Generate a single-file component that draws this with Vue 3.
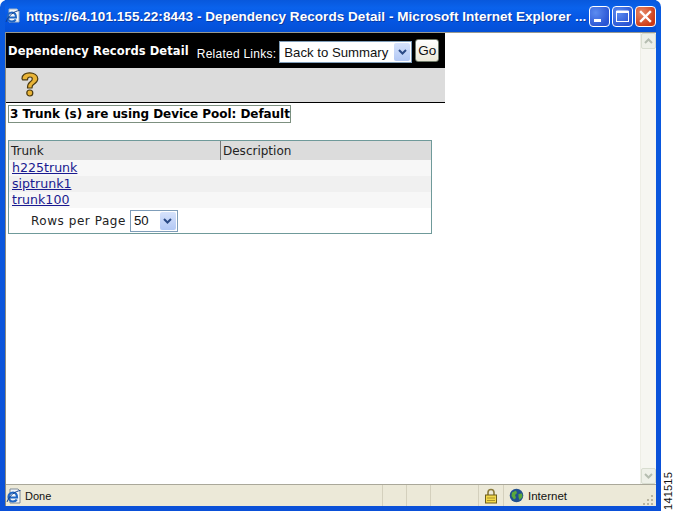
<script setup>
const rows = [
  { name: 'h225trunk' },
  { name: 'siptrunk1' },
  { name: 'trunk100' }
]
</script>

<template>
  <div class="screen">
    <div class="window">
      <div class="titlebar">
        <svg class="ie-small" width="16" height="16" viewBox="0 0 16 16">
          <path d="M4 1h8l2 2v11H4z" fill="#f4f7fb" stroke="#9fb2c8" stroke-width="1" />
          <path d="M3.500 9.500h7.500C11 6 9 4.500 7 4.500C4.500 4.500 2.500 6.500 2.500 9C2.500 11.800 4.500 13.500 7 13.500C8.800 13.500 10.200 12.600 10.800 11.500" fill="none" stroke="#1f66c4" stroke-width="2" />
          <path d="M1 14C3 8 9 3 14.500 2.500" fill="none" stroke="#123f8c" stroke-width="1" />
        </svg>
        <span class="title-text">https://64.101.155.22:8443 - Dependency Records Detail - Microsoft Internet Explorer ...</span>
        <div class="controls">
          <div class="ctl ctl-blue">
            <svg width="19" height="19" viewBox="0 0 19 19"><rect x="4" y="12" width="7" height="3" fill="#fff" /></svg>
          </div>
          <div class="ctl ctl-blue">
            <svg width="19" height="19" viewBox="0 0 19 19"><rect x="3.500" y="4.500" width="12" height="10" fill="none" stroke="#fff" stroke-width="1" /><rect x="3.500" y="3.500" width="12" height="2.500" fill="#fff" /></svg>
          </div>
          <div class="ctl ctl-red">
            <svg width="19" height="19" viewBox="0 0 19 19"><path d="M5 5l9 9M14 5l-9 9" stroke="#fff" stroke-width="2.400" stroke-linecap="square" /></svg>
          </div>
        </div>
      </div>

      <div class="body">
        <div class="page">
          <div class="content">
            <div class="blackbar">
              <span class="bar-title">Dependency Records Detail</span>
              <span class="bar-links">Related Links:</span>
              <div class="select select-back">
                <span class="select-text">Back to Summary</span>
                <span class="select-arrow">
                  <svg width="9" height="6" viewBox="0 0 9 6"><path d="M1 1l3.500 3.500L8 1" fill="none" stroke="#2b4a86" stroke-width="2" /></svg>
                </span>
              </div>
              <div class="go">Go</div>
            </div>
            <div class="toolbar">
              <svg class="help" width="18" height="25" viewBox="0 0 18 25">
                <path d="M1 6.500C1 2.800 4.500 0.800 8.500 0.800C13 0.800 16.800 3 16.800 6.800C16.800 9.800 14.500 11.200 12.500 12.500C11.300 13.300 11 14 11 16H6.500C6.500 13 6.800 11.600 8.800 10.200C10.200 9.200 11.300 8.500 11.300 7C11.300 5.700 10.300 5 9 5C7.500 5 6.500 6 6.500 7.800L1.500 7.800z" fill="#e9b437" stroke="#4b3a10" stroke-width="1.200" stroke-linejoin="round" />
                <circle cx="8.800" cy="21" r="3" fill="#e9b437" stroke="#4b3a10" stroke-width="1.200" />
              </svg>
            </div>
            <div class="status-row"><span class="status-box">3 Trunk (s) are using Device Pool: Default</span></div>

            <div class="table-box">
              <div class="thead">
                <div class="th th-a">Trunk</div>
                <div class="th th-b">Description</div>
              </div>
              <div v-for="r in rows" :key="r.name" class="tr">
                <a class="trunk-link">{{ r.name }}</a>
              </div>
              <div class="pager">
                <span>Rows per Page</span>
                <div class="select select-rows">
                  <span class="select-text">50</span>
                  <span class="select-arrow">
                    <svg width="9" height="6" viewBox="0 0 9 6"><path d="M1 1l3.500 3.500L8 1" fill="none" stroke="#2b4a86" stroke-width="2" /></svg>
                  </span>
                </div>
              </div>
            </div>
          </div>
          <div class="scrollbar">
            <div class="sb-btn">
              <svg width="9" height="6" viewBox="0 0 9 6"><path d="M1 5l3.500-3.500L8 5" fill="none" stroke="#b5bdb0" stroke-width="2" /></svg>
            </div>
            <div class="sb-btn">
              <svg width="9" height="6" viewBox="0 0 9 6"><path d="M1 1l3.500 3.500L8 1" fill="none" stroke="#b5bdb0" stroke-width="2" /></svg>
            </div>
          </div>
        </div>
        <div class="statusbar">
          <svg class="ie-status" width="16" height="16" viewBox="0 0 16 16">
            <path d="M4 1h8l2 2v12H4z" fill="#f4f7fb" stroke="#7d8a99" stroke-width="1" />
            <path d="M3.500 9.500h7.500C11 6 9 4.500 7 4.500C4.500 4.500 2.500 6.500 2.500 9C2.500 11.800 4.500 13.500 7 13.500C8.800 13.500 10.200 12.600 10.800 11.500" fill="none" stroke="#1f66c4" stroke-width="2.200" />
            <path d="M1 14C3 8 9 3 14.500 2.500" fill="none" stroke="#123f8c" stroke-width="1" />
          </svg>
          <span class="sb-done">Done</span>
          <div class="sb-cells">
            <span class="cell"></span>
            <span class="cell"></span>
            <span class="cell cell-wide"></span>
            <span class="cell cell-lock">
              <svg width="14" height="16" viewBox="0 0 14 16">
                <path d="M4 7V4.500a3 3 0 0 1 6 0V7" fill="none" stroke="#8a7a3a" stroke-width="1.600" />
                <rect x="1.500" y="7" width="11" height="8" fill="#f2d84a" stroke="#6e5f1c" />
                <path d="M3 10h8M3 12.500h8" stroke="#a8922a" />
              </svg>
            </span>
            <span class="cell-zone">
              <svg width="15" height="15" viewBox="0 0 15 15">
                <circle cx="7.500" cy="7.500" r="6.800" fill="#21508f" />
                <path d="M3 4.500L7 2.500L8 5L6 7L7 10L5 11.500L2.500 8zM9.500 6L13 5.500L13.500 9L10.500 12L9.500 9z" fill="#5aa83c" />
              </svg>
              <span>Internet</span>
            </span>
            <span class="grip">
              <svg width="12" height="12" viewBox="0 0 12 12" fill="#b8b4a0">
                <rect x="9" y="1" width="2" height="2" /><rect x="5" y="5" width="2" height="2" /><rect x="9" y="5" width="2" height="2" />
                <rect x="1" y="9" width="2" height="2" /><rect x="5" y="9" width="2" height="2" /><rect x="9" y="9" width="2" height="2" />
              </svg>
            </span>
          </div>
        </div>
      </div>
    </div>
    <div class="side">
      <span class="figure-id">141515</span>
    </div>
  </div>
</template>

<style>
html, body { margin: 0; background: #fff; }
</style>

<style scoped>
.screen {
  width: 674px;
  height: 511px;
  display: flex;
  overflow: hidden;
  background: #fff;
  font-family: "DejaVu Sans", sans-serif;
}
.window {
  width: 661px;
  height: 511px;
  box-sizing: border-box;
  display: flex;
  flex-direction: column;
  border-radius: 7px 7px 0 0;
  padding: 0 5px 5px 5px;
  background: linear-gradient(#0a5be0, #0a50d8);
}
.titlebar {
  height: 32px;
  flex: none;
  display: flex;
  align-items: center;
  background: linear-gradient(#0858dc 0, #0a62ec 25%, #0556e4 60%, #0450d6 100%);
}
.ie-small { flex: none; margin: 0 5px 0 0; }
.title-text {
  flex: 1;
  min-width: 0;
  padding-top: 1px;
  color: #fff;
  font: bold 13.500px "Liberation Sans", sans-serif;
  letter-spacing: 0.05px;
  white-space: nowrap;
  text-shadow: 1px 1px 0 #0a3aa0;
}
.controls { display: flex; gap: 2px; flex: none; }
.ctl {
  width: 21px;
  height: 21px;
  box-sizing: border-box;
  border: 1px solid #fff;
  border-radius: 4px;
  display: flex;
  align-items: center;
  justify-content: center;
}
.ctl svg { flex: none; }
.ctl-blue { background: radial-gradient(circle at 30% 30%, #5c8cf0, #2a55d4 75%); }
.ctl-red { background: radial-gradient(circle at 30% 30%, #e88a68, #cc3a16 75%); }
.body {
  flex: 1;
  min-height: 0;
  display: flex;
  flex-direction: column;
  background: #fff;
  border-top: 1px solid #9a9a90;
  border-left: 1px solid #8a8a80;
}
.page { flex: 1; min-height: 0; display: flex; background: #fff; }
.content { flex: 1; min-width: 0; }
.blackbar {
  width: 439px;
  height: 35px;
  box-sizing: border-box;
  padding: 1px 0 0 2px;
  background: #000;
  color: #fff;
  display: flex;
  align-items: center;
}
.bar-title {
  font: bold 11.500px "DejaVu Sans", sans-serif;
  letter-spacing: 0.08px;
  white-space: nowrap;
}
.bar-links {
  font: 12px "Liberation Sans", sans-serif;
  margin-left: 8px;
  margin-top: 5px;
  white-space: nowrap;
  letter-spacing: 0.25px;
}
.select {
  box-sizing: border-box;
  display: flex;
  align-items: center;
  justify-content: space-between;
  background: #fff;
  color: #111;
  border: 1px solid #7f9db9;
}
.select-back {
  width: 133px;
  height: 22px;
  margin-left: 3px;
  padding: 1px 1px 1px 4px;
  font: 13.200px "Liberation Sans", sans-serif;
  margin-top: 2px;
}
.select-rows {
  width: 48px;
  height: 22px;
  padding: 1px 1px 1px 3px;
  font: 13.200px "Liberation Sans", sans-serif;
  letter-spacing: 0;
}
.select-text { white-space: nowrap; }
.select-arrow {
  width: 16px;
  align-self: stretch;
  flex: none;
  display: flex;
  align-items: center;
  justify-content: center;
  background: linear-gradient(#d6e2fb, #b2c8f5);
  border-radius: 2px;
}
.go {
  width: 24px;
  height: 23px;
  box-sizing: border-box;
  margin-left: 3px;
  margin-top: -1px;
  border: 1px solid #6f7a6a;
  border-radius: 3px;
  background: linear-gradient(#fff, #ece9d8);
  color: #111;
  font: 13.500px "Liberation Sans", sans-serif;
  display: flex;
  align-items: center;
  justify-content: center;
}
.toolbar {
  width: 439px;
  height: 35px;
  box-sizing: border-box;
  background: #dcdcdc;
  border-bottom: 1px solid #000;
  padding: 4px 0 0 15px;
}
.help { display: block; }
.status-row {
  height: 37px;
  display: flex;
  align-items: flex-start;
  padding: 2px 0 0 2px;
  box-sizing: border-box;
}
.status-box {
  border: 1px solid #7d9080;
  padding: 0 0 0 1px;
  height: 18px;
  box-sizing: border-box;
  font: bold 12px/16px "DejaVu Sans", sans-serif;
  letter-spacing: -0.05px;
  color: #000;
  white-space: nowrap;
}
.table-box {
  width: 424px;
  height: 94px;
  box-sizing: border-box;
  margin-left: 2px;
  border: 1px solid #6f9a9a;
  font-size: 12px;
  color: #222;
}
.thead { height: 19px; display: flex; background: #dcdcdc; align-items: center; }
.th { line-height: 20px; height: 19px; box-sizing: border-box; padding-left: 2px; white-space: nowrap; }
.th-a { width: 212px; border-right: 1px solid #777; }
.tr {
  height: 16px;
  line-height: 16px;
  padding-left: 3px;
  background: #f7f7f7;
}
.tr:nth-child(odd) { background: #f0f0f0; }
.trunk-link { color: #1a1a90; text-decoration: underline; font-size: 12.600px; }
.pager {
  height: 25px;
  display: flex;
  align-items: center;
  gap: 4px;
  padding-left: 22px;
  font-size: 12px;
  letter-spacing: 0.550px;
}
.scrollbar {
  width: 16px;
  flex: none;
  display: flex;
  flex-direction: column;
  justify-content: space-between;
  background: #f6f6f1;
  border-left: 1px solid #eeeee6;
  box-sizing: border-box;
}
.sb-btn {
  height: 16px;
  display: flex;
  align-items: center;
  justify-content: center;
  background: #eef0e8;
  border: 1px solid #d8ddd0;
  border-radius: 2px;
  box-sizing: border-box;
}
.statusbar {
  height: 22px;
  flex: none;
  display: flex;
  align-items: center;
  background: #ece9d8;
  border-top: 1px solid #aaa89a;
  box-sizing: border-box;
  font: 11px "Liberation Sans", sans-serif;
  color: #111;
}
.ie-status { flex: none; margin-left: 0; }
.sb-done { margin-left: 3px; font-size: 11px; }
.sb-cells { margin-left: auto; display: flex; align-items: center; height: 100%; }
.cell {
  width: 24px;
  height: 100%;
  box-sizing: border-box;
  border-left: 1px solid #d4d0bd;
}
.cell-wide { width: 48px; }
.cell-lock {
  width: 25px;
  display: flex;
  align-items: center;
  justify-content: center;
}
.cell-zone {
  display: flex;
  align-items: center;
  gap: 4px;
  width: 139px;
  height: 100%;
  box-sizing: border-box;
  padding-left: 5px;
  border-left: 1px solid #d4d0bd;
  font-size: 11.500px;
}
.grip { align-self: flex-end; width: 14px; line-height: 0; }
.side {
  flex: 1;
  display: flex;
  align-items: flex-end;
  justify-content: center;
  padding-bottom: 1px;
}
.figure-id {
  writing-mode: vertical-rl;
  transform: rotate(180deg);
  font: 11px "Liberation Sans", sans-serif;
  letter-spacing: 0.2px;
  color: #111;
}
</style>
